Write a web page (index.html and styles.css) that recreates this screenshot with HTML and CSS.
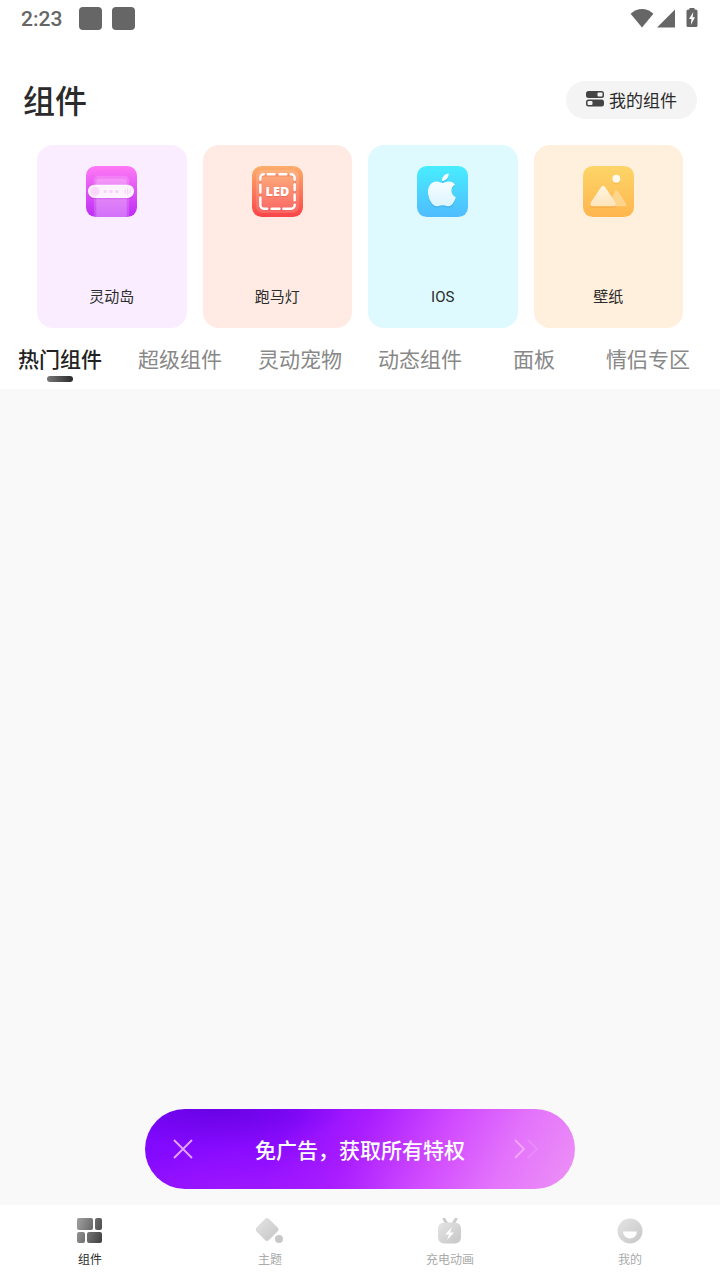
FILE: index.html
```html
<!DOCTYPE html>
<html lang="zh-CN">
<head>
    <meta charset="UTF-8">
    <meta name="viewport" content="width=device-width, initial-scale=1.0">
    <title>组件</title>
    <link rel="stylesheet" href="styles.css">
</head>
<body>

    <!-- 状态栏 -->
    <div class="status-bar">
        <span class="status-time">2:23</span>
        <span class="status-app"></span>
        <span class="status-app"></span>
        <div class="status-icons">
            <svg width="24" height="20" viewBox="0 0 24 20" fill="#666">
                <path d="M12 18.500.6 4.800C4 1.800 7.700 0 12 0s8 1.800 11.400 4.800z"/>
            </svg>
            <svg width="20" height="20" viewBox="0 0 20 20" fill="#666">
                <path d="M19 .5v18H1z"/>
            </svg>
            <svg class="status-battery" width="12" height="20" viewBox="0 0 12 20">
                <path d="M3.500 0h5v1.500H10A1.500 1.500 0 0 1 11.500 3v14.500A1.500 1.500 0 0 1 10 19H2A1.500 1.500 0 0 1 .5 17.500V3A1.500 1.500 0 0 1 2 1.500h1.500z" fill="#666" transform="translate(0 -1)"/>
                <path d="M7.300 4 3 11h2.500L4.800 17 9 9.300H6.600z" fill="#fff" transform="translate(0 -1)"/>
            </svg>
        </div>
    </div>

    <!-- 标题 -->
    <header class="header">
        <h1 class="title">组件</h1>
        <button type="button" class="my-button">
            <svg width="18" height="16" viewBox="0 0 18 16">
                <rect x="0" y="0" width="18" height="7" rx="2.500" fill="#444"/>
                <rect x="11.500" y="1.500" width="5" height="4" rx="1" fill="#f4f4f4"/>
                <rect x="0" y="8.500" width="18" height="7" rx="2.500" fill="#444"/>
                <rect x="1.500" y="10" width="5" height="4" rx="1" fill="#f4f4f4"/>
            </svg>
            我的组件
        </button>
    </header>

    <!-- 分类卡片 -->
    <section class="cards">
        <a href="#island" class="card card-purple">
            <svg width="51" height="51" viewBox="0 0 52 52">
                <defs>
                    <linearGradient id="gPurple" x1="0" y1="0" x2="0" y2="1">
                        <stop offset="0" stop-color="#ff78f4"/>
                        <stop offset="1" stop-color="#bd2cf6"/>
                    </linearGradient>
                </defs>
                <rect width="52" height="52" rx="10" fill="url(#gPurple)"/>
                <path d="M8 52V15a5 5 0 0 1 5-5h26a5 5 0 0 1 5 5v37z" fill="#fff" opacity=".16"/>
                <path d="M10.500 52V16a3 3 0 0 1 3-3h25a3 3 0 0 1 3 3v36z" fill="#fff" opacity=".2"/>
                <rect x="2" y="21" width="47" height="13" rx="6.500" fill="#a020d8" opacity=".2"/>
                <rect x="2" y="19" width="47" height="13.500" rx="6.700" fill="#fef4ff"/>
                <circle cx="9" cy="26" r="4.800" fill="#fcd7fc"/>
                <path d="M18 24.500h3v3h-3zM24 24.500h3v3h-3zM30 24.500h3v3h-3z" fill="#f8d2fb"/>
                <path d="M40 23.500v5M42.500 22.500v7M45 23.500v5" stroke="#f5d0fa"/>
            </svg>
            <span class="card-name">灵动岛</span>
        </a>
        <a href="#led" class="card card-red">
            <svg width="51" height="51" viewBox="0 0 52 52">
                <defs>
                    <linearGradient id="gRed" x1="0" y1="0" x2="0" y2="1">
                        <stop offset="0" stop-color="#fdae6b"/>
                        <stop offset="1" stop-color="#fa4448"/>
                    </linearGradient>
                </defs>
                <rect width="52" height="52" rx="10" fill="url(#gRed)"/>
                <rect x="4" y="4" width="44" height="44" rx="7" fill="#fff" opacity=".14"/>
                <rect x="8.500" y="9.500" width="35" height="35" rx="4" fill="none" stroke="#e85542" stroke-width="2.500" opacity=".3"/>
                <path d="M8.500 14v-2a3.500 3.500 0 0 1 3.500-3.500M16 8.500h7M28 8.500h7M39.500 8.500h.5a3.500 3.500 0 0 1 3.500 3.500v2M43.500 18.500v6M43.500 29v6M43.500 39.500v.5a3.500 3.500 0 0 1-3.500 3.500h-8M28 43.500h-8M15.500 43.500H12A3.500 3.500 0 0 1 8.500 40v-8M8.500 27v-8" fill="none" stroke="#fff" stroke-width="2.500" stroke-linecap="round"/>
                <text x="26" y="32" class="led-text led-shadow">LED</text>
                <text x="26" y="31" class="led-text">LED</text>
            </svg>
            <span class="card-name">跑马灯</span>
        </a>
        <a href="#ios" class="card card-blue">
            <svg width="51" height="51" viewBox="0 0 52 52">
                <defs>
                    <linearGradient id="gBlue" x1="0" y1="0" x2="0" y2="1">
                        <stop offset="0" stop-color="#48edff"/>
                        <stop offset="1" stop-color="#4fbcff"/>
                    </linearGradient>
                    <linearGradient id="gApple" x1="0" y1="0" x2="0" y2="1">
                        <stop offset="0" stop-color="#fff"/>
                        <stop offset="1" stop-color="#dcf5ff"/>
                    </linearGradient>
                    <path id="apple" d="M26 17.300c2 0 3.600-1.500 6.500-1.500 2.500 0 4.800 1.100 6.200 3-5.200 3.500-4.500 10.500 1 13-1.400 4-4 9.200-7.500 9.200-2 0-3.100-1.100-6-1.100s-4 1.100-6 1.100c-4.700 0-9-7.700-9-14.500 0-6.800 4.200-10.700 8.700-10.700 2.500 0 4.500 1.500 6.100 1.500zM25.500 15.300c-.4-3.600 2.900-7.200 6.700-7.600.5 3.900-2.900 7.800-6.700 7.600z"/>
                </defs>
                <rect width="52" height="52" rx="10" fill="url(#gBlue)"/>
                <g transform="translate(0 1.500)" opacity=".25"><use href="#apple" fill="#1878c8"/></g>
                <use href="#apple" fill="url(#gApple)"/>
            </svg>
            <span class="card-name">IOS</span>
        </a>
        <a href="#wallpaper" class="card card-orange">
            <svg width="51" height="51" viewBox="0 0 52 52">
                <defs>
                    <linearGradient id="gOrange" x1="0" y1="0" x2="0" y2="1">
                        <stop offset="0" stop-color="#fdd568"/>
                        <stop offset="1" stop-color="#ffb64e"/>
                    </linearGradient>
                    <linearGradient id="gHill" x1="0" y1="0" x2="0" y2="1">
                        <stop offset="0" stop-color="#fff6e6"/>
                        <stop offset="1" stop-color="#ffe4b8"/>
                    </linearGradient>
                </defs>
                <rect width="52" height="52" rx="10" fill="url(#gOrange)"/>
                <path d="M35.500 25.500 44 38.500a1.500 1.500 0 0 1-1.300 2.500H26l6.500-15.500a1.800 1.800 0 0 1 3 0z" fill="#ffdfa8" opacity=".65"/>
                <path d="M22.500 22.800 33 38.800q1.500 3.700-2 3.700H10q-3.500 0-2-3.700L18.500 22.800q2-2.500 4 0z" fill="#e88a20" opacity=".3"/>
                <path d="M22.500 21.300 33 37.300q1.500 3.700-2 3.700H10q-3.500 0-2-3.700L18.500 21.300q2-2.500 4 0z" fill="url(#gHill)"/>
                <circle cx="34" cy="14.200" r="4" fill="#e88a20" opacity=".25"/>
                <circle cx="34" cy="13" r="4" fill="#fffaf0"/>
            </svg>
            <span class="card-name">壁纸</span>
        </a>
    </section>

    <!-- 标签栏 -->
    <nav class="tabs">
        <a href="#hot" class="tab active">热门组件</a>
        <a href="#super" class="tab">超级组件</a>
        <a href="#pet" class="tab">灵动宠物</a>
        <a href="#dynamic" class="tab">动态组件</a>
        <a href="#panel" class="tab">面板</a>
        <a href="#couple" class="tab">情侣专区</a>
    </nav>

    <!-- 内容区域 -->
    <main class="content">
        <div class="vip-banner">
            <button type="button" class="vip-close" aria-label="关闭">
                <svg width="20" height="20" viewBox="0 0 20 20" fill="none" stroke="#e3a5ff" stroke-width="1.800">
                    <path d="M1 1l18 18M19 1 1 19"/>
                </svg>
            </button>
            <a href="#vip" class="vip-link">免广告，获取所有特权</a>
            <svg class="vip-arrow" width="34" height="20" viewBox="0 0 34 20" fill="none" stroke-width="2">
                <path d="M2 1l9 9-9 9" stroke="#f3a4ff"/>
                <path d="M15 1l9 9-9 9" stroke="#ea8afa"/>
            </svg>
        </div>
    </main>

    <!-- 底部导航 -->
    <nav class="bottom-nav">
        <a href="#widgets" class="nav-item active">
            <svg width="26" height="26" viewBox="0 0 26 26">
                <defs>
                    <linearGradient id="gDark" gradientUnits="userSpaceOnUse" x1="0" y1="8" x2="26" y2="18">
                        <stop offset="0" stop-color="#999"/>
                        <stop offset="1" stop-color="#444"/>
                    </linearGradient>
                </defs>
                <g fill="url(#gDark)">
                    <rect x="0" y="0" width="16" height="12" rx="2"/>
                    <rect x="18" y="0" width="7" height="12" rx="2"/>
                    <rect x="0" y="14" width="8" height="11" rx="2"/>
                    <rect x="10" y="14" width="15" height="11" rx="2"/>
                </g>
            </svg>
            组件
        </a>
        <a href="#theme" class="nav-item">
            <svg width="28" height="26" viewBox="0 0 28 26">
                <defs>
                    <linearGradient id="gLight" x1="0" y1="0" x2="1" y2="1">
                        <stop offset="0" stop-color="#e4e4e4"/>
                        <stop offset="1" stop-color="#c6c6c6"/>
                    </linearGradient>
                </defs>
                <path d="M9 1q2-2 4 0l8.500 8.500q2 2 0 4L13 22q-2 2-4 0L.5 13.500q-2-2 0-4z" fill="url(#gLight)"/>
                <circle cx="23" cy="21" r="4" fill="#c8c8c8"/>
            </svg>
            主题
        </a>
        <a href="#charge" class="nav-item">
            <svg width="26" height="26" viewBox="0 0 26 26">
                <path d="M7 1l2.500 4M19 1l-2.500 4" stroke="#ccc" stroke-width="3" stroke-linecap="round"/>
                <rect x="1" y="4.500" width="23" height="21" rx="6" fill="url(#gLight)"/>
                <path d="M15 9 8 16.500h4L10 22l7-7.500h-4z" fill="#fff"/>
            </svg>
            充电动画
        </a>
        <a href="#mine" class="nav-item">
            <svg width="26" height="26" viewBox="0 0 26 26">
                <circle cx="13" cy="13" r="12.500" fill="url(#gLight)"/>
                <path d="M6 13.500h14a7 7 0 0 1-14 0z" fill="#fff"/>
            </svg>
            我的
        </a>
    </nav>

</body>
</html>
```
FILE: styles.css
```css
* {
    box-sizing: border-box;
}
body {
    display: flex;
    flex-direction: column;
    min-height: 100vh;
    margin: 0;
    font-family: Roboto, "Noto Sans CJK SC", sans-serif;
    background-color: #fff;
    color: #2b2b2b;
}
a {
    color: inherit;
    text-decoration: none;
}
button {
    padding: 0;
    border: none;
    background: none;
    font-family: inherit;
    color: inherit;
    cursor: pointer;
}
svg {
    display: block;
    flex-shrink: 0;
}

/* 状态栏 */
.status-bar {
    display: flex;
    align-items: center;
    gap: 10px;
    height: 37px;
    padding: 0 22px 0 21px;
}
.status-time {
    margin-right: 7px;
    font-size: 21px;
    font-weight: 500;
    color: #666;
}
.status-app {
    width: 23px;
    height: 23px;
    border-radius: 4px;
    background-color: #666;
}
.status-icons {
    display: flex;
    align-items: center;
    gap: 2px;
    margin-left: auto;
}
.status-battery {
    margin-left: 8px;
    overflow: visible;
}

/* 标题 */
.header {
    display: flex;
    align-items: center;
    justify-content: space-between;
    padding: 39px 23px 21px;
}
.title {
    margin: 0;
    padding-top: 4px;
    font-size: 32px;
    line-height: 44px;
    font-weight: 500;
}
.my-button {
    display: flex;
    align-items: center;
    gap: 5px;
    height: 38px;
    padding: 0 20px 2px;
    border-radius: 19px;
    background-color: #f4f4f4;
    font-size: 17px;
}

/* 卡片 */
.cards {
    display: grid;
    grid-template-columns: repeat(4, 1fr);
    gap: 16px;
    padding: 0 37px;
}
.card {
    display: flex;
    flex-direction: column;
    align-items: center;
    justify-content: space-between;
    height: 183px;
    padding: 21px 0 20px;
    border-radius: 16px;
}
.card-purple {
    background-color: #f9edff;
}
.card-red {
    background-color: #ffebe4;
}
.card-blue {
    background-color: #defaff;
}
.card-orange {
    background-color: #fff0dd;
}
.card-name {
    font-size: 15px;
    line-height: 22px;
}
.led-text {
    font-family: "Open Sans", sans-serif;
    font-size: 13px;
    font-weight: 800;
    text-anchor: middle;
    fill: #fff;
}
.led-shadow {
    fill: #e0503c;
    opacity: 0.4;
}

/* 标签栏 */
.tabs {
    display: flex;
    height: 61px;
    overflow: hidden;
}
.tab {
    display: flex;
    flex-direction: column;
    align-items: center;
    flex-shrink: 0;
    min-width: 108px;
    padding: 17px 18px 0;
    font-size: 21px;
    line-height: 30px;
    color: #888;
}
.tab.active {
    font-weight: 500;
    color: #222;
}
.tab.active::after {
    content: "";
    width: 26px;
    height: 6px;
    margin-top: 1px;
    border-radius: 3px;
    background: linear-gradient(to right, #777, #2b2b2b);
}

/* 内容 */
.content {
    display: flex;
    flex: 1;
    align-items: flex-end;
    justify-content: center;
    padding: 16px;
    background-color: #f9f9f9;
}
.vip-banner {
    display: grid;
    grid-template-columns: 1fr auto 1fr;
    align-items: center;
    width: 100%;
    max-width: 430px;
    height: 80px;
    padding: 0 28px;
    border-radius: 40px;
    background:
        radial-gradient(ellipse 130px 40px at 17% 0, rgba(98, 0, 222, 0.8) 0%, rgba(98, 0, 222, 0.5) 40%, rgba(98, 0, 222, 0) 100%),
        radial-gradient(ellipse 160px 40px at 20% 100%, rgba(170, 30, 255, 0.6) 0%, rgba(170, 30, 255, 0) 100%),
        linear-gradient(118deg, #8008ff 0%, #8c0cff 32%, #a81cff 48%, #d04aff 66%, #e373fb 82%, #ee92f6 100%);
    color: #fff;
}
.vip-close {
    justify-self: start;
}
.vip-arrow {
    justify-self: end;
}
.vip-link {
    font-size: 21px;
    font-weight: 500;
}

/* 底部导航 */
.bottom-nav {
    display: grid;
    grid-template-columns: repeat(4, 1fr);
    height: 75px;
}
.nav-item {
    display: flex;
    flex-direction: column;
    align-items: center;
    gap: 6px;
    padding-top: 13px;
    font-size: 12px;
    line-height: 20px;
    color: #aaa;
}
.nav-item.active {
    color: #2b2b2b;
}
```
